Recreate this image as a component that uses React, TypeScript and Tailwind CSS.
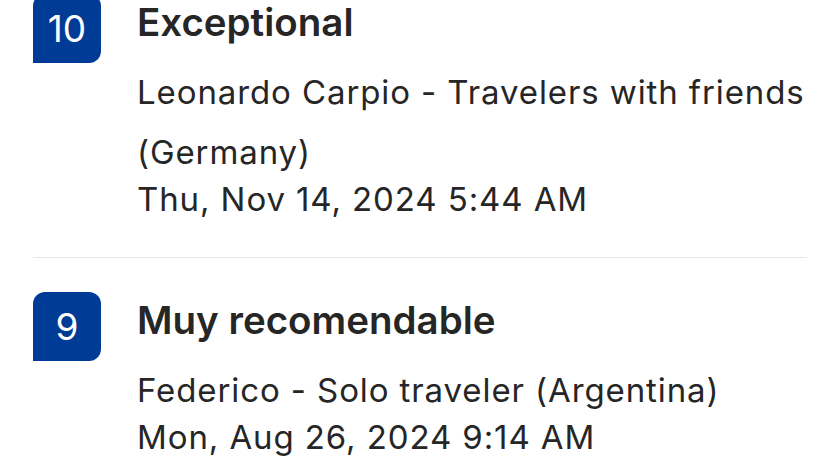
import React from "react";

interface Review {
  score: number;
  title: string;
  author: string;
  date: string;
}

const reviews: Review[] = [
  {
    score: 10,
    title: "Exceptional",
    author: "Leonardo Carpio - Travelers with friends (Germany)",
    date: "Thu, Nov 14, 2024 5:44 AM",
  },
  {
    score: 9,
    title: "Muy recomendable",
    author: "Federico - Solo traveler (Argentina)",
    date: "Mon, Aug 26, 2024 9:14 AM",
  },
];

const ReviewItem: React.FC<{ review: Review; last?: boolean }> = ({
  review,
  last,
}) => {
  return (
    <div
      className={`flex items-start ${
        last ? "pt-[34px]" : "pb-[41px] border-b border-[#e8e8e8]"
      }`}
    >
      {/* Score badge */}
      <div className="flex items-center justify-center w-[68px] h-[69px] shrink-0 bg-[#003b95] rounded-t-[12px] rounded-br-[12px] text-white text-[37px] leading-none">
        {review.score}
      </div>

      {/* Review details */}
      <div className="flex-1 ml-[36px] pt-[6px] text-[#262626]">
        <h3 className="text-[38.5px] leading-[44px] font-semibold">
          {review.title}
        </h3>
        <p className="mt-[18px] text-[33px] leading-[60px] tracking-[0.9px]">
          {review.author}
        </p>
        <p className="text-[33px] leading-[34px] tracking-[0.9px]">
          {review.date}
        </p>
      </div>
    </div>
  );
};

export default function App() {
  return (
    <div className="w-[840px] h-[460px] overflow-hidden bg-white font-['Inter',sans-serif]">
      <div className="-mt-[6px] px-[33px]">
        {reviews.map((r, i) => (
          <ReviewItem key={r.score} review={r} last={i === reviews.length - 1} />
        ))}
      </div>
    </div>
  );
}
